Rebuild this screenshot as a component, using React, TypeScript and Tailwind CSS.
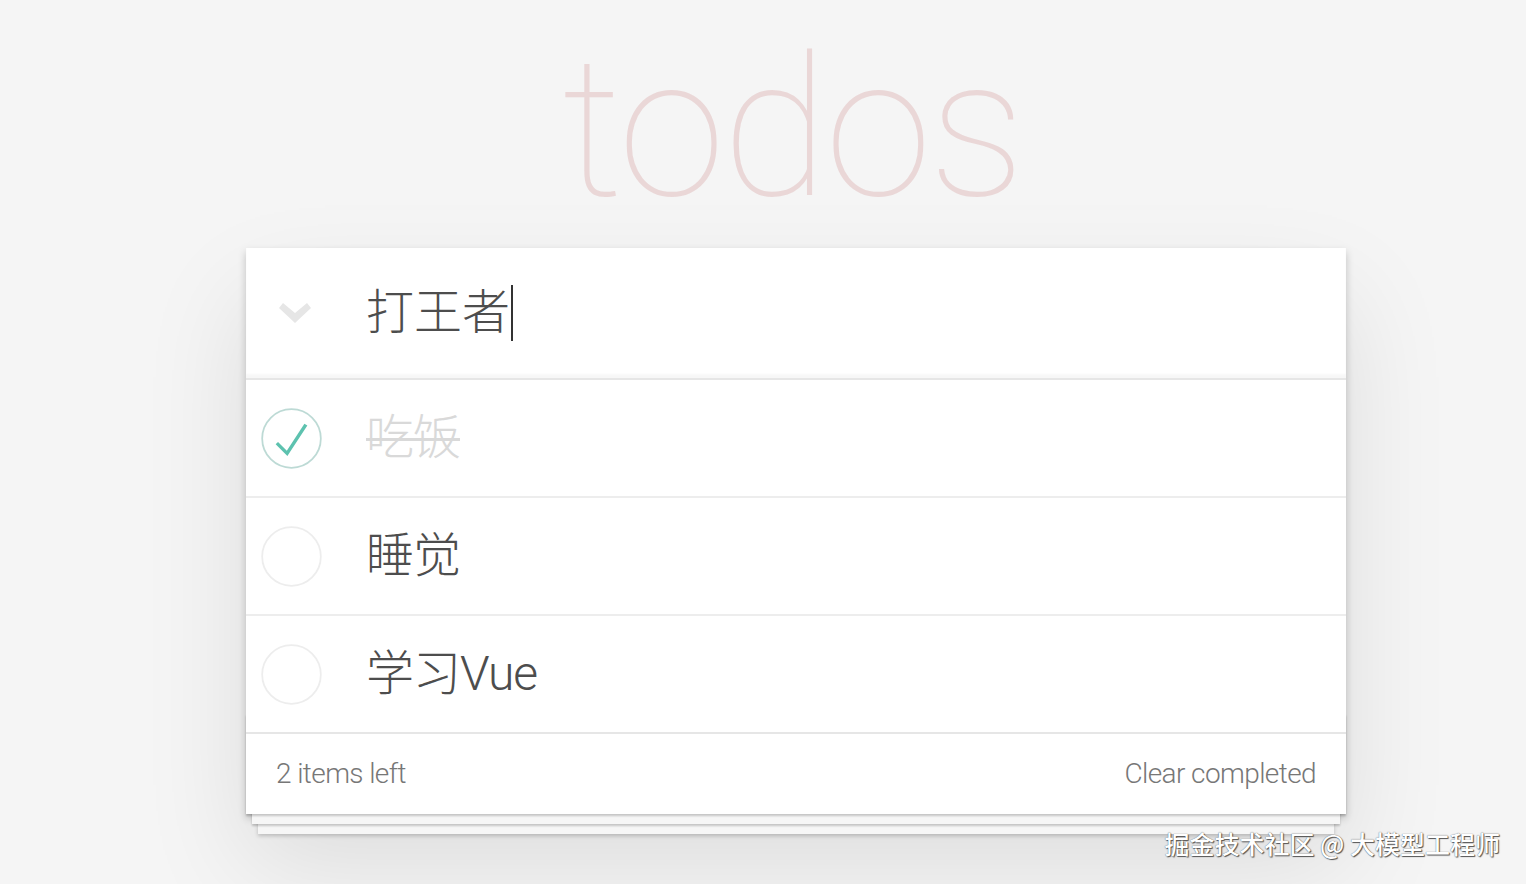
import React from "react";

const todos = [
  { id: 1, title: "吃饭", done: true },
  { id: 2, title: "睡觉", done: false },
  { id: 3, title: "学习Vue", done: false },
];

const sans = "font-['Roboto','Noto_Sans_CJK_SC',sans-serif]";

function Toggle({ done }: { done: boolean }) {
  return (
    <svg width="61" height="61" viewBox="-2 -2 104 104" className="shrink-0">
      <circle cx="50" cy="50" r="50" fill="none" stroke={done ? "#bddad5" : "#ededed"} strokeWidth="3" />
      {done && <path fill="#5dc2af" d="M72 25L42 71 27 56l-4 4 20 20 34-52z" />}
    </svg>
  );
}

export default function App() {
  const left = todos.filter((t) => !t.done).length;

  return (
    <div className={`relative min-h-screen bg-[#f5f5f5] text-[#4d4d4d] ${sans}`}>
      <div className="pl-[246px] pt-[29px]">
        <div className="w-[1100px]">
          <h1 className="mb-[19px] h-[200px] pr-[8px] text-center text-[194px] font-thin leading-[200px] tracking-[-3px] text-[rgba(175,47,47,0.15)]">
            todos
          </h1>

          <section className="relative bg-white shadow-[0_4px_8px_0_rgba(0,0,0,0.2),0_50px_100px_0_rgba(0,0,0,0.1)]">
            {/* header / new todo */}
            <div className="flex h-[130px] items-center shadow-[inset_0_-4px_2px_rgba(0,0,0,0.03)]">
              <div className="flex w-[120px] justify-start pl-[33px]">
                <svg width="32" height="24" viewBox="0 0 32 24">
                  <polygon points="0,7 4,2 16,12 28,2 32,7 16,22" fill="#e6e6e6" />
                </svg>
              </div>
              <div className="flex items-center text-[48px] font-light leading-none text-[#4d4d4d]">
                打王者
                <span className="ml-[1px] inline-block h-[56px] w-[2px] bg-[#333]" />
              </div>
            </div>

            {/* list */}
            <ul className="border-t-2 border-[#e6e6e6]">
              {todos.map((t) => (
                <li key={t.id} className="flex h-[118px] items-center border-b-2 border-[#ededed] pl-[15px]">
                  <Toggle done={t.done} />
                  <span
                    className={`ml-[44px] text-[48px] font-light leading-[1.2] tracking-[-1px] ${
                      t.done ? "text-[#d9d9d9] line-through decoration-[3px]" : "text-[#4d4d4d]"
                    }`}
                  >
                    {t.title}
                  </span>
                </li>
              ))}
            </ul>

            {/* footer */}
            <footer className="relative -mt-[2px] flex h-[82px] items-center justify-between border-t-2 border-[#e6e6e6] px-[30px] text-[28px] font-light tracking-[-0.6px] text-[#777] before:absolute before:inset-x-0 before:bottom-0 before:h-[100px] before:content-[''] before:shadow-[0_2px_2px_rgba(0,0,0,0.2),0_16px_0_-6px_#f6f6f6,0_18px_2px_-6px_rgba(0,0,0,0.2),0_32px_0_-12px_#f6f6f6,0_34px_4px_-12px_rgba(0,0,0,0.2)]">
              <span className="relative">{left} items left</span>
              <span className="relative">Clear completed</span>
            </footer>
          </section>
        </div>
      </div>

      <div className="absolute right-[26px] top-[825px] font-['Noto_Sans_CJK_SC',sans-serif] text-[25px] font-medium text-white [text-shadow:0_0_1px_#444,1px_1px_1px_#555]">
        掘金技术社区 @ 大模型工程师
      </div>
    </div>
  );
}
